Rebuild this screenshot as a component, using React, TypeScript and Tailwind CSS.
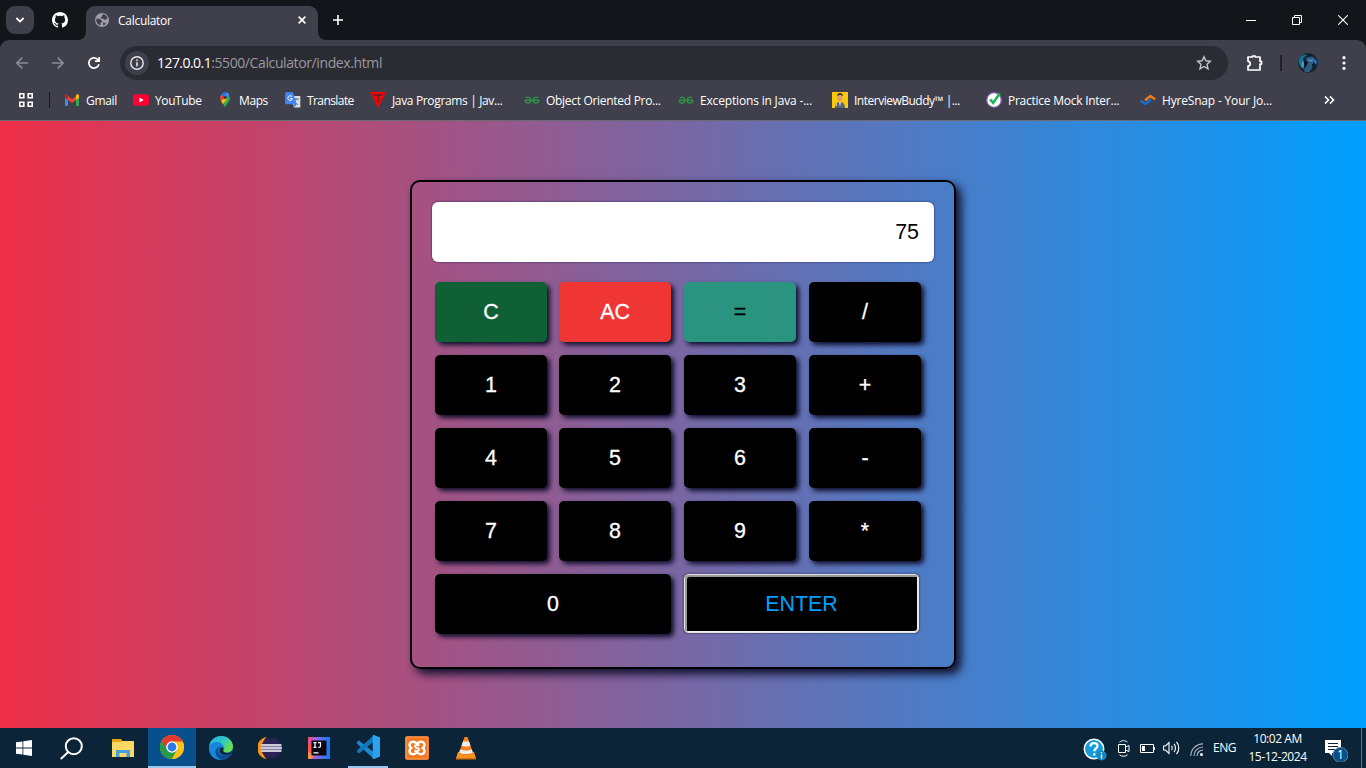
import type { ReactNode } from "react";

const UI = "font-['Open_Sans','Noto_Sans',sans-serif]";

function GithubIcon() {
  return (
    <svg width="16" height="16" viewBox="0 0 16 16" fill="#fff">
      <path d="M8 0C3.58 0 0 3.58 0 8c0 3.54 2.29 6.53 5.47 7.59.4.07.55-.17.55-.38v-1.49c-2.01.37-2.53-.49-2.69-.94-.09-.23-.48-.94-.82-1.13-.28-.15-.68-.52-.01-.53.63-.01 1.08.58 1.23.82.72 1.21 1.87.87 2.33.66.07-.52.28-.87.51-1.07-1.78-.2-3.64-.89-3.64-3.95 0-.87.31-1.59.82-2.15-.08-.2-.36-1.02.08-2.12 0 0 .67-.21 2.2.82a7.6 7.6 0 0 1 4 0c1.53-1.04 2.2-.82 2.2-.82.44 1.1.16 1.92.08 2.12.51.56.82 1.27.82 2.15 0 3.07-1.87 3.75-3.65 3.95.29.25.54.73.54 1.48v2.2c0 .21.15.46.55.38A8 8 0 0 0 16 8c0-4.42-3.58-8-8-8z" />
    </svg>
  );
}

function TitleBar() {
  return (
    <div className="flex h-10 shrink-0 bg-[#14151a]">
      <div className="flex w-[78px] shrink-0 items-center pl-1.5">
        <div className="flex size-7 items-center justify-center rounded-[9px] bg-[#3f404b]">
          <svg width="10" height="8" viewBox="0 0 10 8" fill="none" stroke="#fff" strokeWidth="1.8">
            <path d="M1.4 2 5 5.6 8.6 2" />
          </svg>
        </div>
        <div className="ml-[18px]"><GithubIcon /></div>
      </div>
      <svg className="mt-auto shrink-0" width="8" height="8" viewBox="0 0 8 8" fill="#3f404b"><path d="M8 0v8H0a8 8 0 0 0 8-8z" /></svg>
      <div className="mt-1.5 flex w-[232px] shrink-0 items-center rounded-t-[9px] bg-[#3f404b] pb-1.5 pl-[9px]">
        <svg width="14" height="14" viewBox="0 0 14 14">
          <circle cx="7" cy="7" r="7" fill="#9da0a6" />
          <path d="M1.4 5.4 4.8 6 7 8v1.2L5.4 10v2.5A6 6 0 0 1 1.4 5.4zM7.6 1.2c2.4 0 4.4 1.6 5 3.6l-1.3 1.8-2.1.2-1.3-1.2H6L5.2 4.4l1.7-.7zM8 9.5l2.8.5-.7 1.6-1.8.8z" fill="#3f404b" />
        </svg>
        <span className={`${UI} ml-[9px] pt-0.5 text-[12px] leading-4 tracking-[-0.28px] text-white`}>Calculator</span>
        <svg className="ml-auto mr-3" width="8" height="8" viewBox="0 0 8 8" stroke="#fff" strokeWidth="1.6"><path d="m.6.6 6.8 6.8M7.4.6.6 7.4" /></svg>
      </div>
      <svg className="mt-auto shrink-0" width="8" height="8" viewBox="0 0 8 8" fill="#3f404b"><path d="M0 0v8h8a8 8 0 0 1-8-8z" /></svg>
      <div className="flex items-center pl-[7px]">
        <svg width="10" height="10" viewBox="0 0 10 10" stroke="#fff" strokeWidth="1.6"><path d="M5 0v10M0 5h10" /></svg>
      </div>
      <div className="ml-auto flex">
        <div className="flex w-[46px] items-center justify-center"><svg width="10" height="10" viewBox="0 0 10 10"><path d="M0 5.5h10" stroke="#fff" /></svg></div>
        <div className="flex w-[46px] items-center justify-center"><svg width="10" height="10" viewBox="0 0 10 10" fill="none" stroke="#fff"><path d="M.5 2.5h7v7h-7zM2.5 2.5v-2h7v7h-2" /></svg></div>
        <div className="flex w-[46px] items-center justify-center"><svg width="10" height="10" viewBox="0 0 10 10" stroke="#fff" strokeWidth="1.1"><path d="m.2.2 9.6 9.6M9.8.2.2 9.8" /></svg></div>
      </div>
    </div>
  );
}

function Toolbar() {
  return (
    <div className="h-10 shrink-0 bg-[#14151a]">
      <div className="flex h-10 items-center rounded-t-[9px] bg-[#3f404b] pt-1.5">
        <svg className="ml-4 shrink-0" width="12" height="12" viewBox="0 0 12 12" fill="none" stroke="#8b8c94" strokeWidth="1.5"><path d="M12 6H1M6.3.6.9 6l5.4 5.4" /></svg>
        <svg className="ml-6 shrink-0" width="12" height="12" viewBox="0 0 12 12" fill="none" stroke="#8b8c94" strokeWidth="1.5"><path d="M0 6h11M5.7.6 11.1 6l-5.4 5.4" /></svg>
        <svg className="ml-6 shrink-0" width="12" height="12" viewBox="0 0 12 12" fill="none" stroke="#fff" strokeWidth="1.7"><path d="M10.9 7.2A5.1 5.1 0 1 1 9.6 2.4L11 3.8M11.2 0v4.2H7" /></svg>
        <div className="ml-5 flex h-[34px] w-[1108px] shrink-0 items-center rounded-full bg-[#2b2b33] pl-[5px] pr-4">
          <div className="flex size-6 items-center justify-center rounded-full bg-[#3f404b]">
            <svg width="14" height="14" viewBox="0 0 14 14" fill="none" stroke="#e8e8ea" strokeWidth="1.4"><circle cx="7" cy="7" r="6.2" /><path d="M7 6.2v4M7 3.5v1.5" strokeWidth="1.6" /></svg>
          </div>
          <span className={`${UI} ml-2 text-[14px] leading-5 tracking-[-0.39px] text-[#9a9aa1]`}><span className="tracking-[-0.55px] text-white">127.0.0.1</span>:5500/Calculator/index.html</span>
          <svg className="ml-auto" width="16" height="16" viewBox="0 0 16 16" fill="none" stroke="#c5c5ca" strokeWidth="1.4"><path d="m8 1.7 1.9 4.1 4.5.5-3.4 3 1 4.5L8 11.5l-4 2.3 1-4.5-3.4-3 4.5-.5z" /></svg>
        </div>
        <svg className="ml-[18px] shrink-0" width="18" height="18" viewBox="0 0 18 18" fill="none" stroke="#fff" strokeWidth="1.7"><path d="M2 3h4.5V2h2.8v1H14v4.3h1.5v2.8H14V16H2v-4c3-.2 3-4.4 0-4.7z" strokeLinejoin="round" /></svg>
        <div className="ml-4 h-4 w-0.5 bg-[#202129]" />
        <svg className="ml-4 shrink-0" width="20" height="20" viewBox="0 0 20 20">
          <circle cx="10" cy="10" r="10" fill="#142433" />
          <path d="M1 6C3 2.5 6 1 9 2L5 5.5 6 9l-2.5 5.5C1 12 0 9 1 6z" fill="#14738f" />
          <path d="m8 5 4-2 4 1.5 2 4-3 2-1 5-3 3.5-4 .5-1-3 3-6z" fill="#31587f" />
          <path d="m10 6 3 1 3-1-2 2.5-3-.5zM4 8l2 2-.5 6-2-2z" fill="#4fa3c4" />
          <path d="m6 8 4 1-2.5 6zM11 1l3 2-4 1zM14 11l3-1-2 4z" fill="#07131f" />
          <path d="m17 6 2 2-.5 4-2-2z" fill="#117bd4" />
        </svg>
        <svg className="ml-[24px] shrink-0" width="4" height="14" viewBox="0 0 4 14" fill="#fff"><circle cx="2" cy="1.7" r="1.6" /><circle cx="2" cy="7" r="1.6" /><circle cx="2" cy="12.3" r="1.6" /></svg>
      </div>
    </div>
  );
}

const GfgIcon = () => (
  <svg width="16" height="16" viewBox="0 0 16 16" fill="none" stroke="#2f8d46" strokeWidth="1.5">
    <path d="M.8 8.2h14.4M2 6.1c1.5-1.6 4.9-.9 4.9 2.1 0 3.5-5.3 3.8-5.9.2M14 6.1c-1.5-1.6-4.9-.9-4.9 2.1 0 3.5 5.3 3.8 5.9.2" />
  </svg>
);

const bookmarks: { label: string; box: string; track: string; icon: ReactNode }[] = [
  {
    label: "Gmail", box: "w-[69px]", track: "tracking-[-0.3px]",
    icon: <svg width="16" height="16" viewBox="0 0 16 16"><path d="M1 4v10h3V7z" fill="#4285f4" /><path d="M12 7v7h3V4z" fill="#34a853" /><path d="m4 4 4 3.2L12 4v4l-4 3-4-3z" fill="#ea4335" /><path d="M1 4.2C1 2 3 2 4 3v5L1 5.8z" fill="#c5221f" /><path d="M15 4.2C15 2 13 2 12 3v5l3-2.2z" fill="#fbbc04" /></svg>,
  },
  {
    label: "YouTube", box: "w-[84px]", track: "tracking-[-0.4px]",
    icon: <svg width="16" height="16" viewBox="0 0 16 16"><rect y="2.3" width="16" height="11.4" rx="3" fill="#f03" /><path d="m6.5 5.5 4.2 2.5-4.2 2.5z" fill="#fff" /></svg>,
  },
  {
    label: "Maps", box: "w-[68px]", track: "tracking-[-0.4px]",
    icon: <svg width="16" height="16" viewBox="0 0 16 16"><path d="M8 16c.6-3 5-6 5-10.2L11 2 3.8 9C5.5 11 7.4 13 8 16z" fill="#34a853" /><path d="M3 5.5c0 1.5.4 2.6 1.1 3.8L8 5 4.5 2z" fill="#ea4335" /><path d="m4.2 9.3 3.4-4 2.6 2-4.3 4.8z" fill="#fbbc04" /><path d="M4.3 2A5.2 5.2 0 0 1 9.6.3L6.2 4.4z" fill="#1a73e8" /><path d="M9.6.3A5 5 0 0 1 12.4 3L9.8 6 6.4 4.3z" fill="#4285f4" /><circle cx="8" cy="5.5" r="1.8" fill="#3f404b" /></svg>,
  },
  {
    label: "Translate", box: "w-[85px]", track: "tracking-[-0.58px]",
    icon: <svg width="16" height="16" viewBox="0 0 16 16"><path d="M6 4h9.3v11.6H9z" fill="#dadce0" /><path d="M8 7h6M11 6v1c0 2-1 4-3 5m1-3 4 4" stroke="#607d8b" fill="none" /><path d="M1 .3h7l3.6 12H1a.8.8 0 0 1-.8-.8V1C.2.6.5.3 1 .3z" fill="#4285f4" /><path d="M7 4.7a2.3 2.3 0 1 0 .4 2H5.2" fill="none" stroke="#fff" /><path d="m9 12.3 2.6 0L9.5 15z" fill="#1967d2" /></svg>,
  },
  {
    label: "Java Programs | Jav...", box: "w-[154px]", track: "tracking-[-0.35px]",
    icon: <svg width="16" height="16" viewBox="0 0 16 16"><path d="M.2 0h15.6L8.2 16z" fill="#f00" /><path d="M4.5 3.8V3h7v.8M8 3v7.5" fill="none" stroke="#4b2632" strokeWidth="1.6" /></svg>,
  },
  { label: "Object Oriented Pro...", box: "w-[154px]", track: "tracking-[-0.3px]", icon: <GfgIcon /> },
  { label: "Exceptions in Java -...", box: "w-[154px]", track: "tracking-[-0.17px]", icon: <GfgIcon /> },
  {
    label: "InterviewBuddy™ |...", box: "w-[154px]", track: "tracking-[-0.5px]",
    icon: <svg width="16" height="16" viewBox="0 0 16 16"><path fill="#fbc90a" d="M0 0h16v16H0z" /><path d="M3 16c0-4 2-6 5-6s5 2 5 6z" fill="#526477" /><path d="M5.3 2.6h5v5L8 9.8 5.5 8z" fill="#d9a079" /><path d="M5 4c0-4 6-4 6 0L8 2.8z" fill="#3c3536" /><path d="m7 10 1 5 1-5z" fill="#ddd" /><path d="M3 11h2v3H3z" fill="#e2a47d" /></svg>,
  },
  {
    label: "Practice Mock Inter...", box: "w-[154px]", track: "tracking-[-0.25px]",
    icon: <svg width="16" height="16" viewBox="0 0 16 16"><circle cx="8" cy="8" r="7.3" fill="#fff" stroke="#8660b8" strokeWidth="1.3" /><path d="m4.2 7.4 3 3.5L13.7 1.5" fill="none" stroke="#20b856" strokeWidth="2.6" /></svg>,
  },
  {
    label: "HyreSnap - Your Jo...", box: "w-[154px]", track: "tracking-[-0.18px]",
    icon: <svg width="16" height="16" viewBox="0 0 16 16" fill="none" strokeWidth="2.4" strokeLinejoin="round"><path d="m.8 8.8 4.7 3.2 5.5-4.5" stroke="#1570d1" /><path d="m5 8.2 5.5-4.2 4.7 3.4" stroke="#f97a1d" /></svg>,
  },
];

function BookmarksBar() {
  return (
    <div className="flex h-[41px] shrink-0 items-center border-b border-[#6b6c73] bg-[#3f404b]">
      <svg className="ml-[19px] shrink-0" width="14" height="14" viewBox="0 0 14 14" fill="none" stroke="#fff" strokeWidth="1.6"><path d="M.8.8h4v4h-4zM9.2.8h4v4h-4zM.8 9.2h4v4h-4zM9.2 9.2h4v4h-4z" /></svg>
      <div className="ml-4 h-4 w-px shrink-0 bg-[#191a20]" />
      <div className={`${UI} ml-3.5 flex text-[12px] leading-4 text-white`}>
        {bookmarks.map((b) => (
          <div key={b.label} className={`flex shrink-0 items-center gap-1.5 whitespace-nowrap ${b.box}`}>
            {b.icon}
            <span className={`pt-px ${b.track}`}>{b.label}</span>
          </div>
        ))}
      </div>
      <svg className="ml-[30px] shrink-0" width="11" height="8" viewBox="0 0 11 8" fill="none" stroke="#fff" strokeWidth="1.6"><path d="m1 .5 3.5 3.5L1 7.5M6 .5 9.5 4 6 7.5" /></svg>
    </div>
  );
}

const keys = [
  { t: "C", c: "bg-[#0f6135] text-white" },
  { t: "AC", c: "bg-[#f03535] text-white" },
  { t: "=", c: "bg-[#2a9480] text-black" },
  ..."/123+456-789*".split("").map((t) => ({ t, c: "bg-black text-white" })),
];

const KEY = "h-[60px] rounded-[5px] shadow-[3px_3px_5px_#0f0f2b] [-webkit-text-stroke:0.3px_currentColor]";

function Calculator() {
  return (
    <div className="mt-[59px] h-[489px] w-[546px] rounded-[10px] border-2 border-black px-5 pt-5 font-['Liberation_Sans',Arial,sans-serif] text-[21.4px] shadow-[5px_5px_10px_#0f0f2b]">
      <div className="flex h-[60px] items-center justify-end rounded-[6px] bg-white pr-[15px] text-black shadow-[0_0_2px_#101850]">75</div>
      <div className="ml-[3px] mt-5 grid grid-cols-[124px_125px_125px_112px] gap-y-[13px]">
        {keys.map((k) => (
          <button key={k.t} className={`w-[112px] ${KEY} ${k.c}`}>{k.t}</button>
        ))}
        <button className={`col-span-2 w-[236px] bg-black text-white ${KEY}`}>0</button>
        <button className="col-span-2 h-[59px] w-[235px] rounded-[4px] border border-[#e4e4e4] bg-black pt-px text-[#009fff] shadow-[0_0_2px_#101830,inset_-1px_-1px_0_#f1f1f1,inset_2px_2px_0_#999]">ENTER</button>
      </div>
    </div>
  );
}

const ChromeIcon = () => (
  <svg width="24" height="24" viewBox="0 0 24 24"><circle cx="12" cy="12" r="12" fill="#fbc116" /><path d="M1.6 6A12 12 0 0 0 12 24l5.2-9L12 12z" fill="#249b49" /><path d="M12 6.5h10.7A12 12 0 0 1 12 24l5-9z" fill="#fbc116" /><path d="M12 6.5h10.7A12 12 0 0 0 1.6 6L7 14z" fill="#e33b2e" /><circle cx="12" cy="12" r="5.8" fill="#fff" /><circle cx="12" cy="12" r="4.4" fill="#2878ed" /></svg>
);

const EdgeIcon = () => (
  <svg width="24" height="24" viewBox="0 0 24 24">
    <defs>
      <linearGradient id="edgeTop" x1="0" y1="0" x2="1" y2=".6"><stop stopColor="#28a7e5" /><stop offset=".55" stopColor="#2fc6c6" /><stop offset="1" stopColor="#6be04c" /></linearGradient>
      <linearGradient id="edgeLow" x1="0" y1="0" x2="1" y2="1"><stop stopColor="#1485d9" /><stop offset="1" stopColor="#0b4f9b" /></linearGradient>
    </defs>
    <circle cx="12" cy="12" r="12" fill="url(#edgeLow)" />
    <path d="M0 11C1 4 6 0 12 0c7 0 12 5 12 10.5 0 4-3 6-6.3 6-3.2 0-4.2-1.4-3.4-2.5C16 11 13 7 8 7 4 7 1 8.5 0 11z" fill="url(#edgeTop)" />
    <path d="M0 12c1-4 4-6 8-6 4.5 0 7.5 3.5 6.5 7-1-3-4-3-6-1-2.5 3-1 9 3.5 12C5 24 0 19 0 12z" fill="#1787dc" />
    <path d="M10.5 10.5c-3 3-2 7.5 1.5 9 3.5 1.5 7.5 0 10-2.5-2 5-8 7.5-12 5.5-4.5-2.5-5-10 .5-12z" fill="#0c4d92" />
    <path d="M14.3 14c-1 2.5 3 3.5 6 2.7 1.5-.4 2.5-1.2 3.2-2.4-.4 1.3-.9 2.2-1.5 2.9-3 2-7 2.3-9.5.5-2-1.5-2.5-4.5-.5-6 1.5-1 3 .5 2.3 2.3z" fill="#0b2438" />
  </svg>
);

const EclipseIcon = () => (
  <svg width="24" height="24" viewBox="0 0 24 24"><path d="M9 .8A11.300 11.300 0 0 0 9 23.200 15 15 0 0 1 9 .8z" fill="#f7941e" /><circle cx="13.3" cy="12" r="10.3" fill="#2c2255" /><path d="M3.200 9h20.300M2.700 12h21.200M3.200 15h20.300" stroke="#fff" strokeWidth="1.3" /><path d="M3 10.500h20.500M3 13.500h20.500" stroke="#8681aa" /></svg>
);

function IdeaIcon() {
  return (
    <svg width="22" height="22" viewBox="0 0 22 22">
      <defs><linearGradient id="idea" x1="0" y1="0" x2="1" y2="0"><stop stopColor="#f54b72" /><stop offset=".35" stopColor="#9f62e4" /><stop offset="1" stopColor="#087cfa" /></linearGradient></defs>
      <path d="M0 0h22v22H0z" fill="url(#idea)" /><path d="m0 7 5 1v10L0 14z" fill="#fb5545" /><path d="m0 14 6 5-3 3H0z" fill="#f9944a" />
      <path d="M3.5 3.5h15v15h-15z" fill="#0b0411" /><path d="M5.5 5.7h3M7 5.7v4.6M5.5 10.3h3M10 5.7h2.5v3.5c0 1.2-1.5 1.3-2.2.6M5.5 15.8h5" fill="none" stroke="#fff" strokeWidth="1.2" />
    </svg>
  );
}

const VscodeIcon = () => (
  <svg width="24" height="24" viewBox="0 0 24 24"><path d="m1 7 2-1.6 15 12.2V24L.8 8.5z" fill="#1d88cf" /><path d="m1 17 2 1.6L18 6.4V0L.8 15.5z" fill="#1177b8" /><path d="M18 0 24 2.5v19L18 24c-1 0-1.3-.5-1.3-1V1c0-.5.3-1 1.3-1z" fill="#2aa4f0" /></svg>
);

const XamppIcon = () => (
  <svg width="24" height="24" viewBox="0 0 24 24"><rect width="24" height="24" rx="2" fill="#d65f14" /><rect x="1" y="1" width="22" height="22" rx="1" fill="#f27921" stroke="#f6a368" /><path d="M12 7.8C9 4.5 4.5 5.5 4.5 9c0 1.5.7 2.3 1.7 3-1 .7-1.7 1.5-1.7 3 0 3.5 4.5 4.5 7.5 1.2 3 3.3 7.5 2.3 7.5-1.2 0-1.5-.7-2.3-1.7-3 1-.7 1.7-1.5 1.7-3 0-3.5-4.5-4.5-7.5-1.2z" fill="#f27921" stroke="#fff" strokeWidth="2.4" /><path d="M14.5 9.5c-2-1-4.500-.5-4.500 1 0 2 4 1 4 3 0 1.500-2.500 2-4.500 1" fill="none" stroke="#fff" strokeWidth="2" /></svg>
);

const VlcIcon = () => (
  <svg width="22" height="24" viewBox="0 0 22 24"><path d="m3 16-2 6.5h20L19 16z" fill="#f7941d" /><path d="M1 22h20v1.5H1z" fill="#d96c08" /><path d="M9.5 1h3L18 17c0 3-14 3-14 0z" fill="#f4811d" /><path d="m8.2 5-1.7 4.800c2 1 7 1 9 0L13.800 5c-1.500.8-4.100.8-5.600 0zM5.200 13.300l-1 3.200c3 2 10.600 2 13.600 0l-1-3.200c-3 1.600-8.600 1.600-11.600 0z" fill="#eee" /></svg>
);

const FolderIcon = () => (
  <svg width="22" height="19" viewBox="0 0 22 19"><path d="M0 0h9l1.5 2H22v16H0z" fill="#e5a50e" /><path d="M0 3h9l1-1h12v16H0z" fill="#ffd765" /><path d="M4 18v-7h14v7h-3.5v-4h-7v4z" fill="#43a0dc" /></svg>
);

function TaskItem({ children, state = "" }: { children: ReactNode; state?: string }) {
  return <div className={`flex h-10 w-[49px] shrink-0 items-center justify-center ${state}`}>{children}</div>;
}

function Taskbar() {
  return (
    <div className="flex h-10 shrink-0 bg-[#0b2438]">
      <div className="flex w-12 shrink-0 items-center justify-center">
        <svg width="16" height="16" viewBox="0 0 16 16" fill="#fff"><path d="M0 2.3 6.5 1.4v6.2H0zM7.3 1.2 16 0v7.6H7.3zM0 8.4h6.5v6.2L0 13.7zM7.3 8.4H16V16l-8.7-1.2z" /></svg>
      </div>
      <div className="flex w-[50px] shrink-0 items-center justify-center pr-[3px]">
        <svg width="23" height="23" viewBox="0 0 23 23" fill="none" stroke="#fff" strokeWidth="2"><circle cx="13.8" cy="9.2" r="8" /><path d="m8.2 15-7.4 7" /></svg>
      </div>
      <TaskItem><FolderIcon /></TaskItem>
      <TaskItem state="ml-px w-[48px]! border-b-2 border-[#98c6ec] bg-[#07508b]"><ChromeIcon /></TaskItem>
      <TaskItem><EdgeIcon /></TaskItem>
      <TaskItem><EclipseIcon /></TaskItem>
      <TaskItem><IdeaIcon /></TaskItem>
      <TaskItem state="ml-[5px] mr-1 w-[40px]! border-b-2 border-[#98c6ec]"><VscodeIcon /></TaskItem>
      <TaskItem><XamppIcon /></TaskItem>
      <TaskItem><VlcIcon /></TaskItem>
      <div className={`${UI} ml-auto flex items-center text-[12px] text-white`}>
        <svg className="mt-1" width="24" height="24" viewBox="0 0 24 24"><circle cx="11" cy="11" r="9.7" fill="#159bd7" stroke="#fff" strokeWidth="1.5" /><path d="M7.5 8.5c0-4.5 7-4.5 7-.5 0 2.5-3.2 2.5-3.2 5.3M11.3 15.2v2.2" fill="none" stroke="#fff" strokeWidth="2.3" /><circle cx="18.5" cy="17.5" r="5" fill="#1688c4" /><path d="M18.5 16.5v4M18.5 14v1.2" stroke="#fff" strokeWidth="1.3" /></svg>
        <svg className="ml-[11px]" width="12" height="17" viewBox="0 0 12 17" fill="none" stroke="#fff"><path d="M.5 4.5h7v8h-7zM7.5 7l3.5-1.5v6L7.5 10M1.5 2.2C4 .2 7 .2 9.5 2.2M1.5 14.8c2.5 2 5.5 2 8 0" /></svg>
        <svg className="ml-2.5" width="15" height="9" viewBox="0 0 15 9" fill="none" stroke="#fff"><path d="M.5.5h13v8H.5zM14.5 3v3" /><path d="M2 2h3v5H2z" fill="#fff" stroke="none" /></svg>
        <svg className="ml-2" width="17" height="14" viewBox="0 0 17 14" fill="none" stroke="#fff" strokeWidth="1.1"><path d="M.5 5h2L6 1.5v11L2.5 9h-2zM8.5 5c1 1 1 3 0 4M11 3c2 2 2 6 0 8M13.5 1c3 3 3 9 0 12" /></svg>
        <svg className="ml-2.5 mt-0.5" width="13" height="13" viewBox="0 0 13 13" fill="none" stroke="#aeb8c0" strokeWidth="1.2"><path d="M.8 13A12.2 12.2 0 0 1 13 .8M4 13a9 9 0 0 1 9-9M7 13a6 6 0 0 1 6-6" /><circle cx="11.5" cy="11.5" r="1.5" fill="#fff" stroke="none" /></svg>
        <span className="ml-2.5 w-[23px] tracking-[-0.5px]">ENG</span>
        <div className="ml-2 mr-px flex w-[67px] flex-col items-center whitespace-nowrap leading-[18px]">
          <span className="tracking-[-0.45px]">10:02 AM</span>
          <span className="tracking-[-0.45px]">15-12-2024</span>
        </div>
        <div className="relative ml-3 h-7 w-6">
          <svg width="24" height="28" viewBox="0 0 24 28"><path d="M1 6h16v13h-9v3l-3-3H1z" fill="#fff" /><path d="M4 9.5h10M4 12.5h10M4 15.5h7" stroke="#0b2438" /><circle cx="16.5" cy="21" r="7.5" fill="#07508b" stroke="#687d90" /></svg>
          <span className="absolute left-[13px] top-[13px] text-[12px] leading-4">1</span>
        </div>
        <div className="ml-[13px] mr-1 h-10 w-px bg-[#64727d]" />
      </div>
    </div>
  );
}

export default function App() {
  return (
    <div className="flex h-[768px] w-[1366px] flex-col overflow-hidden">
      <TitleBar />
      <Toolbar />
      <BookmarksBar />
      <main className="flex flex-1 justify-center bg-[linear-gradient(to_right,#ef2f49,#009fff)]">
        <Calculator />
      </main>
      <Taskbar />
    </div>
  );
}
